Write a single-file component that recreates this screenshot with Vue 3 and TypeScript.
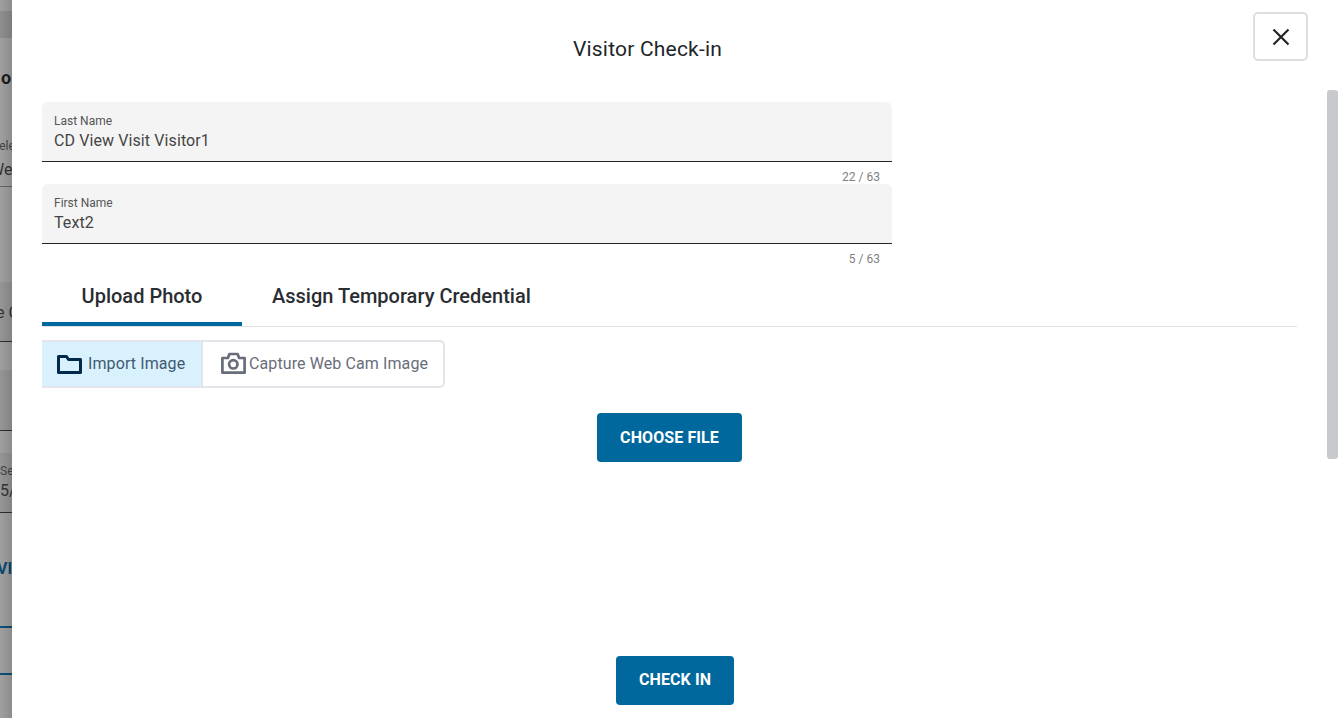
<script setup lang="ts">
const fields = [
  { label: 'Last Name', value: 'CD View Visit Visitor1', count: '22 / 63' },
  { label: 'First Name', value: 'Text2', count: '5 / 63' },
]
</script>

<template>
  <div class="page">
    <aside class="behind">
      <div class="b-top"></div>
      <div class="b-title">o</div>
      <div class="b-field">
        <span class="b-small sel">Select</span>
        <span class="b-val wk">Week</span>
      </div>
      <div class="b-band">
        <span class="b-val ec">e C</span>
      </div>
      <div class="b-band2"></div>
      <div class="b-date">
        <span class="b-small">Se</span>
        <span class="b-val dt">5/</span>
      </div>
      <div class="b-link">VI</div>
      <div class="b-rule"></div>
      <div class="b-rule second"></div>
    </aside>

    <main class="modal">
      <header class="head">
        <h1>Visitor Check-in</h1>
        <button class="close" aria-label="Close">
          <svg width="18" height="18" viewBox="0 0 18 18"><path d="M1.500 1.500l15 15M16.500 1.500l-15 15" stroke="#212529" stroke-width="2.200" fill="none" /></svg>
        </button>
      </header>

      <section class="form">
        <div v-for="f in fields" :key="f.label" class="field">
          <div class="box">
            <label>{{ f.label }}</label>
            <div class="value">{{ f.value }}</div>
          </div>
          <div class="count">{{ f.count }}</div>
        </div>
      </section>

      <nav class="tabs">
        <div class="tab active">Upload Photo</div>
        <div class="tab">Assign Temporary Credential</div>
      </nav>

      <div class="toggle">
        <div class="opt on">
          <svg width="28" height="24" viewBox="0 0 28 24"><path d="M3.500 20.500V4.500h8l2 3h12v13z" fill="none" stroke="#00294d" stroke-width="3" stroke-linejoin="round" /></svg>
          <span>Import Image</span>
        </div>
        <div class="opt">
          <svg width="28" height="26" viewBox="0 0 28 26"><path d="M1.400 7h5.500l1.500-4h8.200l1.500 4h5.500v14.700H1.400z" fill="none" stroke="#686d7a" stroke-width="2.700" stroke-linejoin="round" /><circle cx="12.300" cy="13.300" r="4.200" fill="none" stroke="#686d7a" stroke-width="2.700" /></svg>
          <span>Capture Web Cam Image</span>
        </div>
      </div>

      <div class="choose-row"><button class="primary choose">CHOOSE FILE</button></div>
      <div class="check-row"><button class="primary check">CHECK IN</button></div>

      <div class="scroll"></div>
    </main>
  </div>
</template>

<style>
html, body { margin: 0; padding: 0; overflow: hidden; background: #fff; }
</style>

<style scoped>
.page {
  display: flex;
  width: 1338px;
  height: 718px;
  overflow: hidden;
  font-family: Roboto, "Liberation Sans", sans-serif;
  color: #212529;
}
.behind {
  position: relative;
  flex: 0 0 12px;
  width: 12px;
  overflow: hidden;
  background: #a0a0a0;
  white-space: nowrap;
}
.behind::after {
  content: "";
  position: absolute;
  inset: 0;
  background: linear-gradient(to right, rgba(0, 0, 0, 0), rgba(0, 0, 0, .13));
}
.b-top { height: 27px; margin-top: 11px; background: rgba(0, 0, 0, .1); }
.b-title { margin: 30px 0 0 1px; height: 20px; line-height: 20px; font-size: 18px; font-weight: 700; color: #1c1c1c; }
.b-small { display: block; font-size: 12px; line-height: 14px; color: #444; }
.b-val { display: block; font-size: 16px; line-height: 20px; color: #333; }
.b-field { box-sizing: border-box; height: 99px; padding-top: 51px; border-bottom: 1px solid #666; }
.sel { margin-left: -8px; }
.wk { margin: 7px 0 0 -10px; }
.b-band { box-sizing: border-box; margin-top: 95px; height: 60px; padding-top: 21px; background: rgba(0, 0, 0, .06); border-bottom: 1px solid #2e2e2e; }
.ec { margin-left: -4px; }
.b-band2 { box-sizing: border-box; margin-top: 28px; height: 61px; background: rgba(0, 0, 0, .06); border-bottom: 1px solid #2e2e2e; }
.b-date { box-sizing: border-box; margin-top: 22px; height: 60px; padding-top: 11px; background: rgba(0, 0, 0, .06); border-bottom: 1px solid #2e2e2e; }
.dt { margin: 3px 0 0 0; }
.b-link { margin: 46px 0 0 -3px; font-size: 16px; font-weight: 700; line-height: 20px; color: #0a4a70; }
.b-rule { margin-top: 47px; height: 2px; background: #0b4f78; }
.b-rule.second { margin-top: 45px; }

.modal {
  position: relative;
  flex: 1;
  min-width: 0;
  background: #fff;
  padding: 0 41px 0 30px;
}
.head {
  position: relative;
  height: 102px;
  display: flex;
  justify-content: center;
  box-sizing: border-box;
  padding: 36px 44px 0 0;
}
.head h1 {
  margin: 0;
  font-size: 21px;
  line-height: 26px;
  font-weight: 400;
  letter-spacing: .2px;
}
.close {
  position: absolute;
  top: 12px;
  right: -11px;
  width: 55px;
  height: 49px;
  padding: 0;
  background: #fff;
  border: 2px solid #dedede;
  border-radius: 5px;
  display: flex;
  align-items: center;
  justify-content: center;
}
.form { width: 850px; }
.box {
  height: 59px;
  background: #f4f4f4;
  border-bottom: 1px solid #212529;
  border-radius: 6px 6px 0 0;
  padding: 0 12px;
}
.box label {
  display: block;
  padding-top: 12px;
  font-size: 12px;
  line-height: 14px;
  color: #555;
}
.value {
  margin-top: 2px;
  font-size: 16px;
  line-height: 22px;
  letter-spacing: .1px;
  color: #444;
}
.count {
  height: 22px;
  padding: 8px 12px 0;
  box-sizing: border-box;
  text-align: right;
  font-size: 12px;
  line-height: 14px;
  color: #808080;
}
.tabs {
  display: flex;
  height: 61px;
  box-sizing: border-box;
  border-bottom: 1px solid #dfe1e4;
}
.tab {
  box-sizing: border-box;
  height: 60px;
  padding: 0 30px;
  line-height: 60px;
  font-size: 20px;
  font-weight: 500;
  color: #2a2d31;
  white-space: nowrap;
}
.tab.active {
  width: 200px;
  padding: 0;
  text-align: center;
  border-bottom: 4px solid #00689c;
}
.toggle {
  display: inline-flex;
  height: 48px;
  margin-top: 13px;
  box-sizing: border-box;
  border: 2px solid #e3e5ea;
  border-left: 0;
  border-radius: 0 5px 5px 0;
  vertical-align: top;
}
.opt {
  display: flex;
  align-items: center;
  height: 44px;
  font-size: 16px;
  color: #686d7a;
  white-space: nowrap;
  padding: 0 15px 0 18px;
  letter-spacing: .1px;
}
.opt span { padding-bottom: 2px; }
.opt svg { flex: none; }
.opt.on {
  width: 161px;
  box-sizing: border-box;
  padding: 0 0 0 13px;
  background: #d9f1fd;
  color: #3f5a73;
  border-right: 2px solid #e3e5ea;
}
.opt.on span { margin-left: 5px; }
.choose-row {
  display: flex;
  justify-content: center;
  margin-top: 25px;
}
.primary {
  height: 49px;
  padding: 0;
  border: 0;
  border-radius: 4px;
  background: #00689c;
  color: #fff;
  font-family: inherit;
  font-size: 16px;
  font-weight: 700;
  letter-spacing: .1px;
}
.choose { width: 145px; }
.check-row {
  display: flex;
  justify-content: center;
  margin-top: 194px;
}
.check { width: 118px; margin-left: 11px; padding-bottom: 2px; }
.scroll {
  position: absolute;
  top: 90px;
  right: 0;
  width: 11px;
  height: 369px;
  border-radius: 3px;
  background: #c8c9cd;
}
</style>
